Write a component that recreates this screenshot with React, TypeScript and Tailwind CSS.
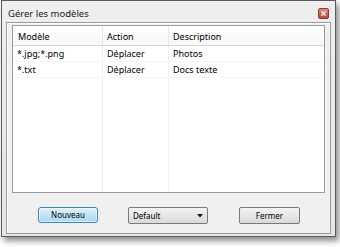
import React from 'react';

const rows = [
  { pattern: '*.jpg;*.png', action: 'Déplacer', description: 'Photos' },
  { pattern: '*.txt', action: 'Déplacer', description: 'Docs texte' },
];

const App = () => {
  return (
    <div className="w-[340px] h-[247px] bg-white pl-px font-['Noto_Sans',sans-serif] text-black">
      <div className="w-[335px] h-[237px] border border-[#5a5a5a] bg-gradient-to-b from-[#efefef] to-[#e6e6e6] shadow-[3px_4px_6px_rgba(0,0,0,0.45)] flex flex-col">
        {/* title bar */}
        <div className="h-[21px] flex items-end justify-between pl-[6px] pr-[6px] pb-[2px]">
          <span className="text-[9.5px] leading-[12px] text-[#1a1a1a]">Gérer les modèles</span>
          <div className="w-[11px] h-[11px] mb-px rounded-[2px] border border-[#8a3a30] bg-gradient-to-b from-[#e08a7c] to-[#c0473a] flex items-center justify-center">
            <svg width="5" height="5" viewBox="0 0 5 5">
              <path d="M0.5 0.5 L4.5 4.5 M4.5 0.5 L0.5 4.5" stroke="#fff" strokeWidth="1.3" />
            </svg>
          </div>
        </div>

        {/* client area */}
        <div className="mx-[4px] mb-[2px] flex-1 border border-[#9a9a9a] bg-[#f0f0f0] shadow-[inset_1px_1px_0_#ffffff] flex flex-col px-[5px] pt-[2px]">
          <div className="h-[168px] border border-[#9c9c9c] bg-white flex flex-col text-[9px]">
            <div className="h-[20px] flex border-b border-[#d8d8d8] bg-gradient-to-b from-white to-[#f6f7f8]">
              <div className="w-[90px] border-r border-[#e2e5e9] flex items-center pl-[5px] pt-[2px]">Modèle</div>
              <div className="w-[66px] border-r border-[#e2e5e9] flex items-center pl-[4px] pt-[2px]">Action</div>
              <div className="flex-1 flex items-center pl-[4px] pt-[2px]">Description</div>
            </div>
            <div className="flex-1 flex">
              <div className="w-[90px] border-r border-[#f0f0f0]">
                {rows.map((r) => (
                  <div key={r.pattern} className="h-[16px] flex items-center pl-[4px] pt-px border-b border-[#f6f6f6]">{r.pattern}</div>
                ))}
              </div>
              <div className="w-[66px] border-r border-[#f0f0f0]">
                {rows.map((r) => (
                  <div key={r.pattern} className="h-[16px] flex items-center pl-[4px] pt-px border-b border-[#f6f6f6]">{r.action}</div>
                ))}
              </div>
              <div className="flex-1">
                {rows.map((r) => (
                  <div key={r.pattern} className="h-[16px] flex items-center pl-[4px] pt-px border-b border-[#f6f6f6]">{r.description}</div>
                ))}
              </div>
            </div>
          </div>

          {/* buttons */}
          <div className="mt-[14px] flex text-[8px]">
            <button className="ml-[26px] w-[60px] h-[16px] rounded-[3px] border border-[#3c84b8] bg-gradient-to-b from-[#dff2fc] to-[#a6d7f2] shadow-[inset_0_0_0_1px_rgba(255,255,255,0.6)] flex items-center justify-center">
              Nouveau
            </button>
            <button className="ml-[30px] w-[80px] h-[17px] rounded-[2px] border border-[#7a7a7a] bg-gradient-to-b from-[#f4f4f4] to-[#d9d9d9] flex items-center justify-between pl-[4px] pr-[4px]">
              <span>Default</span>
              <svg width="6" height="4" viewBox="0 0 6 4">
                <path d="M0 0 L6 0 L3 3.5 Z" fill="#1a1a1a" />
              </svg>
            </button>
            <button className="ml-[31px] w-[61px] h-[17px] rounded-[2px] border border-[#7a7a7a] bg-gradient-to-b from-[#f4f4f4] to-[#d9d9d9] flex items-center justify-center">
              Fermer
            </button>
          </div>
        </div>
      </div>
    </div>
  );
};

export default App;
